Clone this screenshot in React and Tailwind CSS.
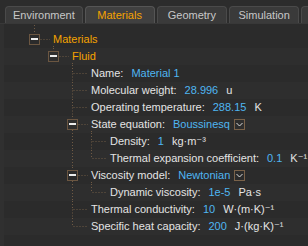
import React from 'react';

const LINE = '#6f5a44';

const tabs = [
  { name: 'Environment', w: 'w-[78px]' },
  { name: 'Materials', w: 'w-[70px]', active: true },
  { name: 'Geometry', w: 'w-[71px]' },
  { name: 'Simulation', w: 'w-[70px]' },
];

// level, label, value, unit, box (expandable), last sibling, ancestor lines that continue
const rows = [
  { level: 0, label: 'Materials', box: true, last: true, conts: [], orange: true },
  { level: 1, label: 'Fluid', box: true, last: true, conts: [false], orange: true },
  { level: 2, label: 'Name:', value: 'Material 1', conts: [false, false] },
  { level: 2, label: 'Molecular weight:', value: '28.996', unit: 'u', conts: [false, false] },
  { level: 2, label: 'Operating temperature:', value: '288.15', unit: 'K', conts: [false, false] },
  { level: 2, label: 'State equation:', value: 'Boussinesq', select: true, box: true, conts: [false, false] },
  { level: 3, label: 'Density:', value: '1', unit: 'kg·m⁻³', conts: [false, false, true] },
  { level: 3, label: 'Thermal expansion coefficient:', value: '0.1', unit: 'K⁻¹', last: true, conts: [false, false, true] },
  { level: 2, label: 'Viscosity model:', value: 'Newtonian', select: true, box: true, conts: [false, false] },
  { level: 3, label: 'Dynamic viscosity:', value: '1e-5', unit: 'Pa·s', last: true, conts: [false, false, true] },
  { level: 2, label: 'Thermal conductivity:', value: '10', unit: 'W·(m·K)⁻¹', conts: [false, false] },
  { level: 2, label: 'Specific heat capacity:', value: '200', unit: 'J·(kg·K)⁻¹', last: true, conts: [false, false] },
];

const col = (l) => 30.5 + 19 * l;

function Gutter({ row }) {
  const L = row.level;
  const c = col(L);
  const textX = 49 + 19 * L;
  const width = textX + 1;
  return (
    <svg width={width} height="17" className="shrink-0">
      <g stroke={LINE} strokeWidth="1" strokeDasharray="1 2" fill="none">
        {row.conts.map((on, l) =>
          on ? <line key={l} x1={col(l)} y1="0" x2={col(l)} y2="17" /> : null
        )}
        <line x1={c} y1="0" x2={c} y2={row.box ? 3 : 8.5} />
        {!row.last && <line x1={c} y1={row.box ? 14 : 8.5} x2={c} y2="17" />}
        <line x1={row.box ? c + 6 : c + 1} y1="8.5" x2={textX - 3} y2="8.5" />
        {row.box && <line x1={col(L + 1)} y1="15" x2={col(L + 1)} y2="17" />}
      </g>
      {row.box && (
        <>
          <rect x={c - 5} y="3.5" width="10" height="10" fill="none" stroke="#6b5641" />
          <rect x={c - 3.5} y="7" width="7" height="2" fill="#ececec" />
        </>
      )}
    </svg>
  );
}

function SelectBox() {
  return (
    <svg width="11" height="11" className="ml-1 shrink-0">
      <rect x="0.5" y="0.5" width="10" height="10" fill="none" stroke="#7a6249" />
      <polyline points="2.5,4 5.5,7 8.5,4" fill="none" stroke="#dcdcdc" strokeWidth="1" />
    </svg>
  );
}

export default function App() {
  return (
    <div className="w-[308px] h-[246px] overflow-hidden bg-[#2b2b2b] font-['Liberation_Sans','DejaVu_Sans',sans-serif] text-[11px] leading-none select-none">
      {/* tab strip */}
      <div className="flex items-end gap-[2px] pl-[5px] pt-[6px] h-[24px] bg-[#2c2c2c] border-b border-[#383838]">
        {tabs.map((t) => (
          <div
            key={t.name}
            className={`${t.w} h-[17px] flex items-center justify-center rounded-t-[4px] border border-b-0 ${
              t.active
                ? 'bg-[#404040] border-[#555555] text-[#f5a300]'
                : 'bg-[#3a3a3a] border-[#4a4a4a] text-[#c8c8c8]'
            }`}
          >
            {t.name}
          </div>
        ))}
        <div className="w-[7px] h-[17px] rounded-tl-[4px] border border-b-0 border-r-0 border-[#4a4a4a] bg-[#3a3a3a]" />
      </div>

      <div className="flex h-[222px]">
        <div className="w-[4px] bg-[#303030]" />
        <div className="flex-1 flex flex-col">
          <div className="h-[7px] relative">
            <svg width="40" height="7">
              <line x1={col(0)} y1="1" x2={col(0)} y2="7" stroke={LINE} strokeDasharray="1 2" />
            </svg>
          </div>
          {rows.map((row, i) => (
            <div
              key={row.label}
              className={`h-[17px] flex items-center ${i % 2 === 0 ? 'bg-[#2b2b2b]' : 'bg-[#2e2e2e]'}`}
            >
              <Gutter row={row} />
              <div className="-ml-px flex items-center gap-2 whitespace-nowrap">
                <span className={row.orange ? 'text-[#f5a300]' : 'text-[#e4e4e4]'}>{row.label}</span>
                {row.value && (
                  <span className="flex items-center text-[#4fb6f2]">
                    {row.value}
                    {row.select && <SelectBox />}
                  </span>
                )}
                {row.unit && <span className="text-[#e4e4e4]">{row.unit}</span>}
              </div>
            </div>
          ))}
        </div>
      </div>
    </div>
  );
}
